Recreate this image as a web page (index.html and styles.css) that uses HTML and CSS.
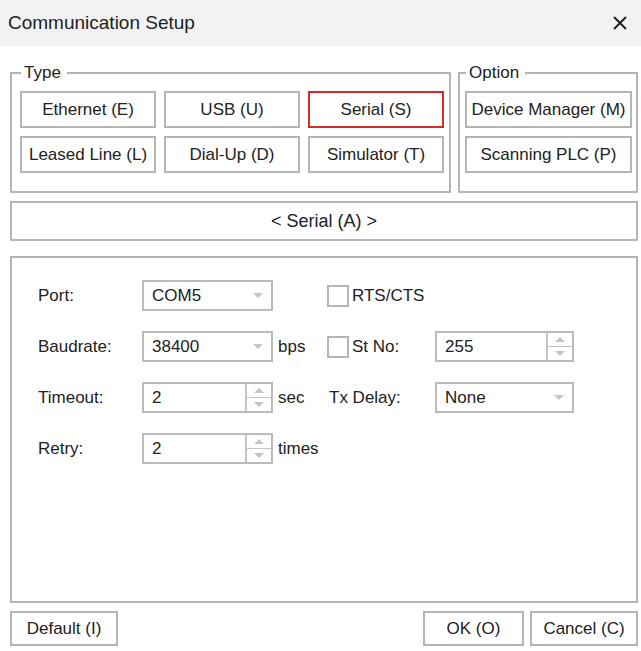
FILE: index.html
```html
<!DOCTYPE html>
<html lang="en">
  <head>
    <title>Communication Setup</title>
    <link rel="stylesheet" href="styles.css">
  </head>
  <body>
    <div class="titlebar">
      <span class="title">Communication Setup</span>
      <svg class="close" width="16" height="16" viewBox="0 0 16 16">
        <path d="M2 2 L14 14 M14 2 L2 14" stroke="#222" stroke-width="2" fill="none" />
      </svg>
    </div>

    <div class="dialog">
      <div class="groups">
        <fieldset class="group type-group">
          <legend>Type</legend>
          <div class="type-grid">
            <button>Ethernet (E)</button>
            <button>USB (U)</button>
            <button class="selected">Serial (S)</button>
            <button>Leased Line (L)</button>
            <button>Dial-Up (D)</button>
            <button>Simulator (T)</button>
          </div>
        </fieldset>
        <fieldset class="group option-group">
          <legend>Option</legend>
          <div class="option-list">
            <button>Device Manager (M)</button>
            <button>Scanning PLC (P)</button>
          </div>
        </fieldset>
      </div>

      <div class="mode-bar">&lt; Serial (A) &gt;</div>

      <div class="settings">
        <div class="form">
          <label>Port:</label>
          <div class="field select"><span>COM5</span><i class="arrow"></i></div>
          <span></span>
          <div class="check-wrap wide"><span class="check"></span>RTS/CTS</div>

          <label>Baudrate:</label>
          <div class="field select"><span>38400</span><i class="arrow"></i></div>
          <span class="unit">bps</span>
          <div class="check-wrap"><span class="check"></span>St No:</div>
          <div class="field spin">
            <span>255</span>
            <div class="spin-btns"><i class="up"></i><i class="down"></i></div>
          </div>

          <label>Timeout:</label>
          <div class="field spin">
            <span>2</span>
            <div class="spin-btns"><i class="up"></i><i class="down"></i></div>
          </div>
          <span class="unit">sec</span>
          <label class="label2">Tx Delay:</label>
          <div class="field select"><span>None</span><i class="arrow"></i></div>

          <label>Retry:</label>
          <div class="field spin">
            <span>2</span>
            <div class="spin-btns"><i class="up"></i><i class="down"></i></div>
          </div>
          <span class="unit">times</span>
        </div>
      </div>

      <div class="footer">
        <button class="default-btn">Default (I)</button>
        <div class="footer-right">
          <button class="ok-btn">OK (O)</button>
          <button class="cancel-btn">Cancel (C)</button>
        </div>
      </div>
    </div>
  </body>
</html>
```

FILE: styles.css
```css
html {
  font-family: "Liberation Sans", Arial, sans-serif;
  color: #222;
}

body {
  margin: 0;
  width: 641px;
  background: #fff;
}

button {
  height: 37px;
  padding: 0;
  border: 2px solid #b5b5b5;
  background: #fff;
  color: #222;
  font-family: inherit;
  font-size: 17px;
}

button.selected {
  border-color: #d42a2a;
}

.titlebar {
  display: flex;
  flex-flow: row;
  align-items: center;
  justify-content: space-between;
  height: 46px;
  padding: 0 13px 0 8px;
  background: #f2f2f2;
}

.title {
  font-size: 19px;
}

.dialog {
  padding: 17px 3px 0 10px;
}

.groups {
  display: flex;
  flex-flow: row;
  gap: 7px;
}

.group {
  margin: 0;
  min-width: 0;
  border: 2px solid #b5b5b5;
  padding: 8px 5px 18px 8px;
}

.group legend {
  font-size: 17px;
  line-height: 20px;
  padding: 0 6px 0 3px;
  margin-left: 1px;
}

.type-group {
  box-sizing: border-box;
  width: 441px;
}

.option-group {
  flex: 1;
  padding-left: 5px;
  padding-right: 4px;
}

.type-grid {
  display: grid;
  grid-template-columns: repeat(3, 1fr);
  gap: 8px;
}

.option-list {
  display: grid;
  gap: 8px;
}

.mode-bar {
  display: flex;
  align-items: center;
  justify-content: center;
  box-sizing: border-box;
  height: 40px;
  margin-top: 8px;
  border: 2px solid #b5b5b5;
  font-size: 18px;
}

.settings {
  box-sizing: border-box;
  height: 347px;
  margin-top: 15px;
  padding: 22px 0 0 26px;
  border: 2px solid #b5b5b5;
}

.form {
  display: grid;
  grid-template-columns: 104px 131px 54px 108px 139px;
  grid-auto-rows: 31px;
  row-gap: 20px;
  align-items: center;
  font-size: 17px;
}

.unit {
  padding-left: 5px;
}

.label2 {
  padding-left: 2px;
}

.field {
  display: flex;
  align-items: center;
  box-sizing: border-box;
  height: 31px;
  border: 2px solid #bbb;
  padding-left: 8px;
}

.field span {
  flex: 1;
}

.select .arrow {
  width: 0;
  height: 0;
  margin-right: 8px;
  border-left: 5px solid transparent;
  border-right: 5px solid transparent;
  border-top: 5px solid #c4c4c4;
}

.spin-btns {
  display: flex;
  flex-flow: column;
  align-self: stretch;
  width: 24px;
  border-left: 2px solid #c4c4c4;
}

.spin-btns i {
  flex: 1;
  display: flex;
  align-items: center;
  justify-content: center;
}

.spin-btns .up {
  border-bottom: 1px solid #c4c4c4;
}

.spin-btns .up::before,
.spin-btns .down::before {
  content: "";
  width: 0;
  height: 0;
  border-left: 5px solid transparent;
  border-right: 5px solid transparent;
}

.spin-btns .up::before {
  border-bottom: 5px solid #c4c4c4;
}

.spin-btns .down::before {
  border-top: 5px solid #c4c4c4;
}

.check-wrap {
  display: flex;
  align-items: center;
  gap: 3px;
}

.check-wrap.wide {
  grid-column: 4 / span 2;
}

.check {
  box-sizing: border-box;
  width: 22px;
  height: 22px;
  border: 2px solid #b5b5b5;
}

.footer {
  display: flex;
  flex-flow: row;
  justify-content: space-between;
  margin-top: 8px;
}

.footer button {
  height: 35px;
}

.footer-right {
  display: flex;
  gap: 6px;
}

.default-btn {
  width: 108px;
}

.ok-btn {
  width: 101px;
}

.cancel-btn {
  width: 108px;
}
```
